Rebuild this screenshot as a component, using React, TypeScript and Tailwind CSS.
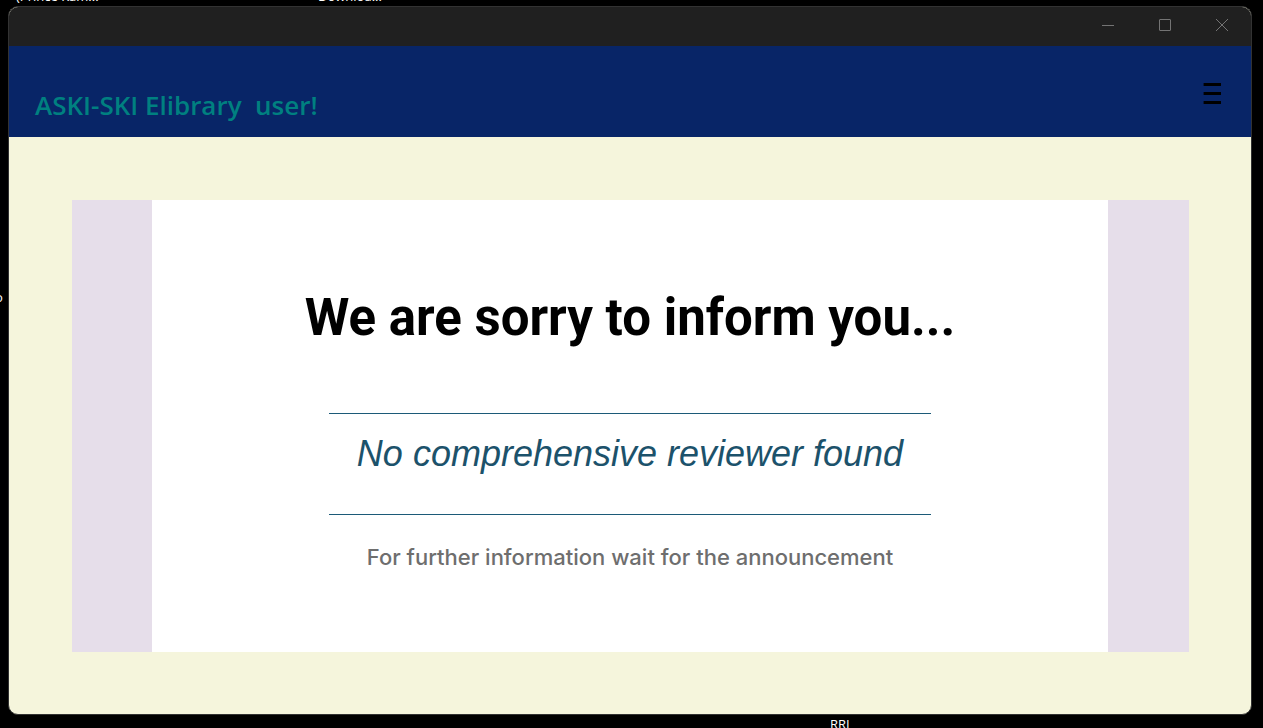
function DesktopLabels() {
  const label =
    "absolute whitespace-nowrap font-['Open_Sans',sans-serif] text-[13px] leading-4 text-white";
  return (
    <>
      <span className={`${label} -top-3 left-4`}>(Prince Kam...</span>
      <span className={`${label} -top-3 left-[318px]`}>Downloa...</span>
      <span className={`${label} top-[289px] left-0 -ml-[5px]`}>o</span>
      <span className={`${label} top-[716px] left-[830px]`}>RRL</span>
    </>
  );
}

function TitleBar() {
  const button = "flex h-full w-[57px] items-center justify-center";
  return (
    <div className="flex h-[39px] shrink-0 justify-end bg-[#202020] pr-px pb-1 text-[#747474]">
      <button type="button" aria-label="Minimize" className={button}>
        <svg width="12" height="12" viewBox="0 0 12 12" fill="none" stroke="currentColor">
          <path d="M0 6.5h12" />
        </svg>
      </button>
      <button type="button" aria-label="Maximize" className={button}>
        <svg width="12" height="12" viewBox="0 0 12 12" fill="none" stroke="currentColor">
          <rect x="0.5" y="0.5" width="11" height="11" rx="0.5" />
        </svg>
      </button>
      <button type="button" aria-label="Close" className={button}>
        <svg width="12" height="12" viewBox="0 0 12 12" fill="none" stroke="currentColor">
          <path d="M0 0l12 12M12 0L0 12" />
        </svg>
      </button>
    </div>
  );
}

function Header() {
  return (
    <header className="flex h-[91px] shrink-0 items-center justify-between bg-[#082567] pr-7 pl-[26px]">
      <h1 className="pt-[26px] font-['Open_Sans',sans-serif] text-[26px] leading-9 font-semibold whitespace-pre text-[#008080]">
        {"ASKI-SKI Elibrary  user!"}
      </h1>
      <button type="button" aria-label="Open menu" className="pt-1 text-black">
        <svg width="20" height="22" viewBox="0 0 20 22" fill="currentColor">
          <path d="M1 0h17v3h-17zM1 9h17v3h-17zM1 18h17v3h-17z" />
          <path d="M0 0h1v3h-1zM0 9h1v3h-1zM0 18h1v3h-1z" opacity="0.4" />
        </svg>
      </button>
    </header>
  );
}

function Notice() {
  return (
    <section className="flex flex-1 bg-[#e6deea] pr-[81px] pl-20">
      <div className="flex flex-1 flex-col items-center bg-white pt-[86px] text-center">
        <h2 className="font-['Roboto',sans-serif] text-[51px] leading-[64px] font-bold whitespace-nowrap text-black">
          We are sorry to inform you...
        </h2>
        <div className="mt-[63px] flex h-[102px] w-[602px] flex-col items-center border-y border-[#1c5a78] pt-[18px]">
          <p className="font-['Liberation_Sans',Arial,sans-serif] text-[36px] leading-[44px] whitespace-nowrap text-[#1c526b] italic">
            No comprehensive reviewer found
          </p>
        </div>
        <p className="mt-[26px] font-['Inter',sans-serif] text-[22px] leading-8 font-medium whitespace-nowrap text-[#6e6e6e]">
          For further information wait for the announcement
        </p>
      </div>
    </section>
  );
}

export default function App() {
  return (
    <div className="relative flex min-h-screen flex-col overflow-hidden bg-black pt-1.5 pr-[11px] pb-[13px] pl-2">
      <DesktopLabels />
      <div className="relative flex flex-1 flex-col overflow-hidden rounded-[10px] border border-[#323232] bg-[#f5f5dc]">
        <TitleBar />
        <Header />
        <main className="flex flex-1 flex-col pt-[63px] pr-[62px] pb-[62px] pl-[63px]">
          <Notice />
        </main>
      </div>
    </div>
  );
}
